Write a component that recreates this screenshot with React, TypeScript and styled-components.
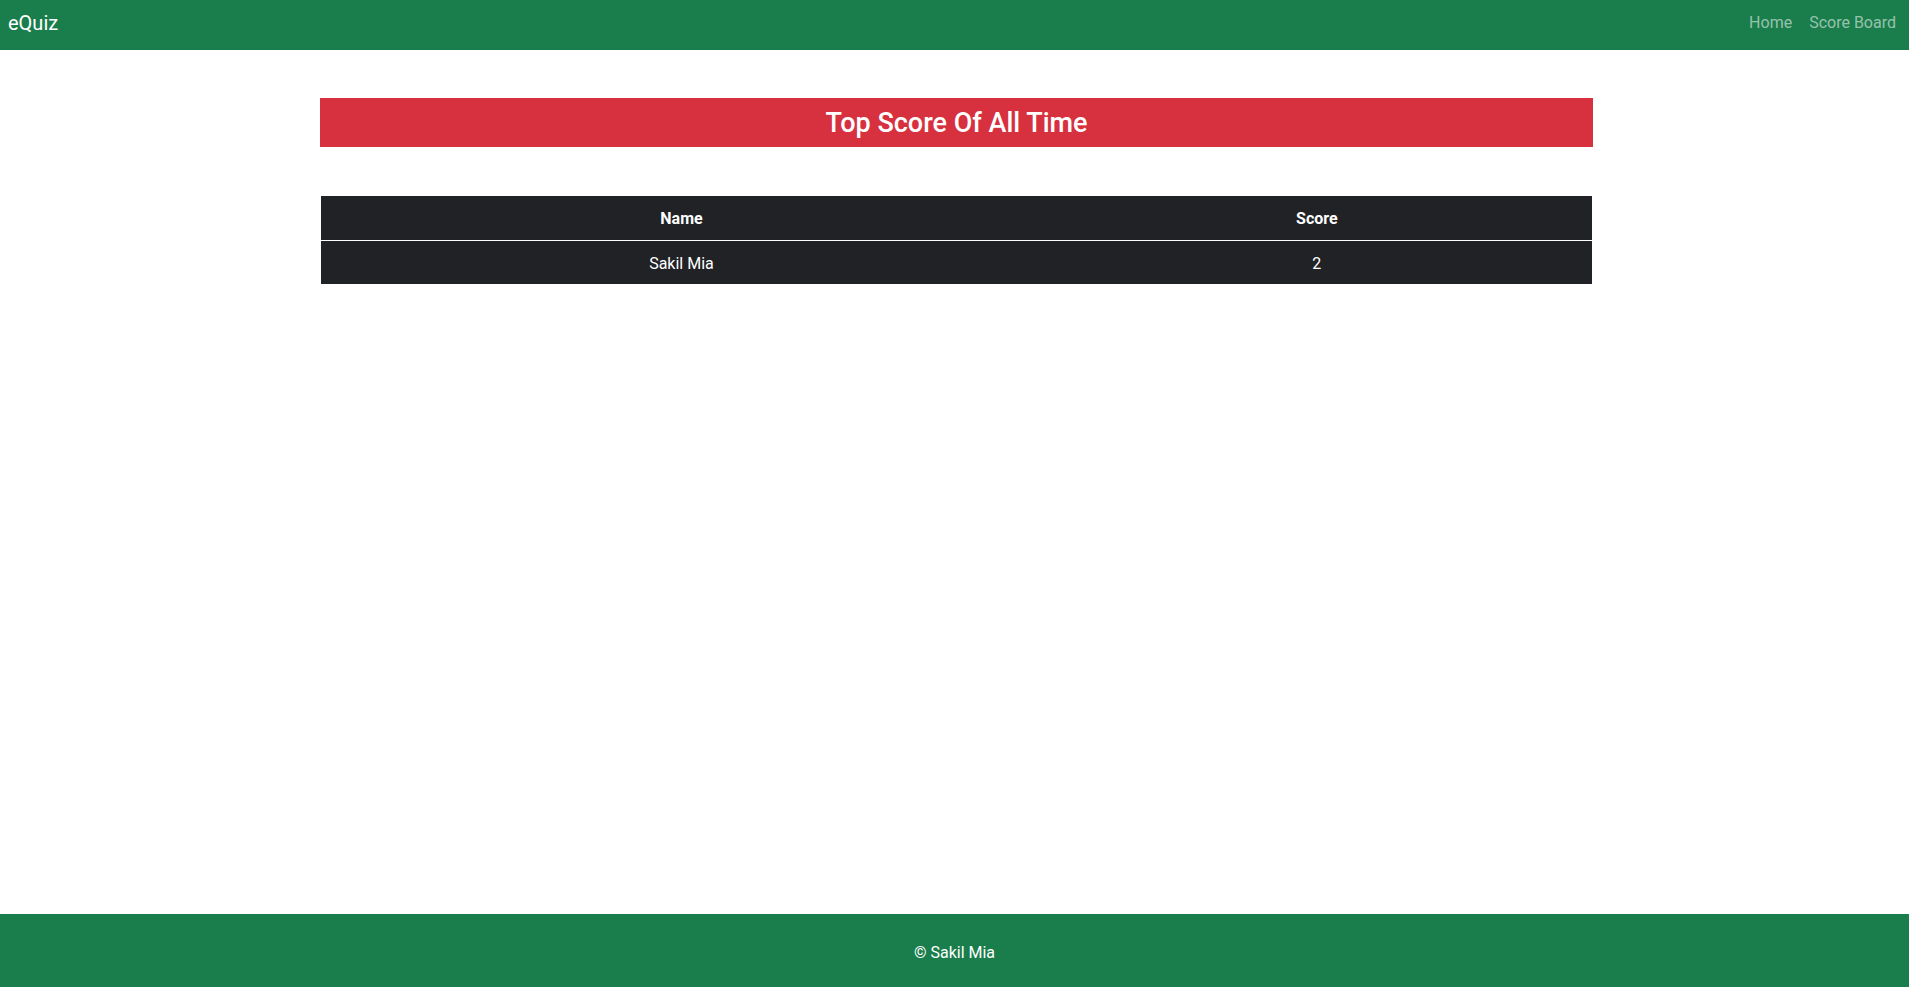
import React from "react";
import styled, { createGlobalStyle } from "styled-components";

const Global = createGlobalStyle`
  html, body { margin: 0; padding: 0; }
  body {
    font-family: Roboto, "Liberation Sans", Arial, sans-serif;
    font-size: 16px;
    line-height: 1.5;
    color: #212529;
    background: #fff;
  }
  * { box-sizing: border-box; }
`;

const Page = styled.div`
  min-height: 100vh;
  display: flex;
  flex-direction: column;
`;

const Navbar = styled.nav`
  height: 50px;
  background: #1a7d4c;
  display: flex;
  align-items: center;
  justify-content: space-between;
  padding: 0 13px 4px 8px;
`;

const Brand = styled.a`
  color: #fff;
  font-size: 20px;
  text-decoration: none;
  line-height: 1.5;
`;

const NavLinks = styled.div`
  display: flex;
  gap: 17px;
`;

const NavLink = styled.a`
  color: rgba(255, 255, 255, 0.55);
  font-size: 16px;
  text-decoration: none;
`;

const Main = styled.main`
  flex: 1;
  width: 66.67%;
  margin-left: calc(16.67% + 2px);
  padding-top: 48px;
  display: flex;
  flex-direction: column;
  gap: 49px;
`;

const TitleBar = styled.h3`
  margin: 0;
  background: #d7303e;
  color: #fff;
  text-align: center;
  font-size: 27px;
  font-weight: 500;
  line-height: 1.2;
  padding: 9px 0 7px;
  height: 49px;
`;

const Table = styled.table`
  width: calc(100% - 2px);
  margin: 0 1px;
  border-collapse: collapse;
  background: #202226;
  color: #fff;
  text-align: center;
`;

const HeadCell = styled.th<{ $w: string }>`
  width: ${(p) => p.$w};
  font-weight: 700;
  font-size: 16px;
  height: 44px;
  padding: 2px 8px 0;
  border-bottom: 1px solid #fff;
`;

const Cell = styled.td`
  font-size: 16px;
  height: 44px;
  padding: 3px 8px 0;
`;

const Footer = styled.footer`
  height: 73px;
  background: #1a7d4c;
  color: #fff;
  display: flex;
  align-items: center;
  justify-content: center;
  padding-top: 4px;
  font-size: 16px;
`;

const rows = [{ name: "Sakil Mia", score: 2 }];

export default function App() {
  return (
    <Page>
      <Global />
      <Navbar>
        <Brand href="#">eQuiz</Brand>
        <NavLinks>
          <NavLink href="#">Home</NavLink>
          <NavLink href="#">Score Board</NavLink>
        </NavLinks>
      </Navbar>
      <Main>
        <TitleBar>Top Score Of All Time</TitleBar>
        <Table>
          <thead>
            <tr>
              <HeadCell $w="56.7%">Name</HeadCell>
              <HeadCell $w="43.3%">Score</HeadCell>
            </tr>
          </thead>
          <tbody>
            {rows.map((r) => (
              <tr key={r.name}>
                <Cell>{r.name}</Cell>
                <Cell>{r.score}</Cell>
              </tr>
            ))}
          </tbody>
        </Table>
      </Main>
      <Footer>© Sakil Mia</Footer>
    </Page>
  );
}
